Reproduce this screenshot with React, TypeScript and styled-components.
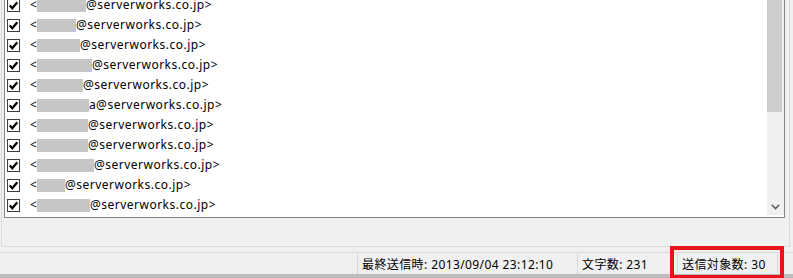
import React from 'react';
import styled, { createGlobalStyle } from 'styled-components';

interface Recipient {
  pre?: string;
  mask: number;
  tail?: string;
}

const recipients: Recipient[] = [
  { mask: 49 },
  { pre: ' ', mask: 39 },
  { mask: 43 },
  { mask: 55 },
  { mask: 46 },
  { mask: 52, tail: 'a' },
  { mask: 51 },
  { mask: 51 },
  { mask: 57 },
  { mask: 28 },
  { pre: ' ', mask: 53 },
];

const GlobalStyle = createGlobalStyle`
  html, body {
    margin: 0;
    padding: 0;
    background: #f0f0f0;
    overflow: hidden;
  }
  body {
    font-family: "Noto Sans", "Noto Sans CJK JP", sans-serif;
    font-size: 12px;
    color: #000;
  }
`;

const Screen = styled.div`
  width: 793px;
  height: 278px;
  display: flex;
  flex-direction: column;
  overflow: hidden;
`;

const Panel = styled.div`
  margin: -9px 3px 0 1px;
  border: 1px solid #dadada;
  padding: 2px 4px 28px 2px;
`;

const ListBox = styled.div`
  display: flex;
  border: 1px solid #828790;
  background: #fff;
  padding-bottom: 2px;
`;

const Rows = styled.div`
  flex: 1;
  display: flex;
  flex-direction: column;
`;

const Row = styled.div`
  height: 20px;
  display: flex;
  align-items: center;
  padding-left: 2px;
  white-space: nowrap;
`;

const Check = styled.span`
  width: 11px;
  height: 11px;
  border: 1px solid #3c3c3c;
  background: #fff;
  display: flex;
  align-items: center;
  justify-content: center;
  margin-right: 10px;
`;

const Address = styled.span`
  display: flex;
  align-items: center;
  line-height: 16px;
  letter-spacing: 0.5px;
`;

const Lt = styled.span`
  letter-spacing: 0;
`;

const Mask = styled.span<{ $w: number }>`
  display: inline-block;
  width: ${p => p.$w}px;
  height: 13px;
  background: #c6c6c6;
`;

const ScrollBar = styled.div`
  width: 17px;
  background: #f0f0f0;
  display: flex;
  flex-direction: column;
  justify-content: space-between;
`;

const Thumb = styled.div`
  width: 15px;
  height: 117px;
  background: #cdcdcd;
`;

const Arrow = styled.div`
  height: 17px;
  display: flex;
  align-items: center;
  justify-content: center;
`;

const StatusBar = styled.div`
  margin-top: 5px;
  border-top: 1px solid #d9d9d9;
  height: 23px;
  display: flex;
  align-items: center;
  padding-left: 357px;
  font-family: "Noto Sans", "Noto Sans CJK JP", sans-serif;
  letter-spacing: 0.4px;
`;

const Cell = styled.div<{ $w: number; $last?: boolean }>`
  position: relative;
  width: ${p => p.$w}px;
  height: 20px;
  box-sizing: border-box;
  border-left: 1px solid #d7d7d7;
  border-right: ${p => (p.$last ? '1px solid #d7d7d7' : 'none')};
  padding-left: 4px;
  display: flex;
  align-items: center;
  white-space: nowrap;
`;

const Highlight = styled.div`
  position: absolute;
  left: -8px;
  right: -7px;
  top: -8px;
  bottom: -5px;
  border: 4px solid #e8141c;
  pointer-events: none;
`;

const BottomEdge = styled.div`
  height: 4px;
  background: #bdbdbd;
  margin-top: auto;
`;

function CheckMark (): React.ReactElement {
  return (
    <svg width='9' height='9' viewBox='0 0 9 9'>
      <path d='M0.8 4.4 L3.3 7.2 L8.3 1.3' fill='none' stroke='#000' strokeWidth='2.2' />
    </svg>
  );
}

function App (): React.ReactElement {
  return (
    <Screen>
      <GlobalStyle />
      <Panel>
        <ListBox>
          <Rows>
            {recipients.map((r, i) => (
              <Row key={i}>
                <Check><CheckMark /></Check>
                <Address>
                  <Lt>{'<'}</Lt>{r.pre}<Mask $w={r.mask} />{r.tail}@serverworks.co.jp&gt;
                </Address>
              </Row>
            ))}
          </Rows>
          <ScrollBar>
            <Thumb />
            <Arrow>
              <svg width='9' height='6' viewBox='0 0 9 6'>
                <path d='M0.8 0.8 L4.5 4.5 L8.2 0.8' fill='none' stroke='#606060' strokeWidth='1.6' />
              </svg>
            </Arrow>
          </ScrollBar>
        </ListBox>
      </Panel>
      <StatusBar>
        <Cell $w={220}>最終送信時: 2013/09/04 23:12:10</Cell>
        <Cell $w={100}>文字数: 231</Cell>
        <Cell $w={101} $last>
          送信対象数: 30
          <Highlight />
        </Cell>
      </StatusBar>
      <BottomEdge />
    </Screen>
  );
}

export default App;
